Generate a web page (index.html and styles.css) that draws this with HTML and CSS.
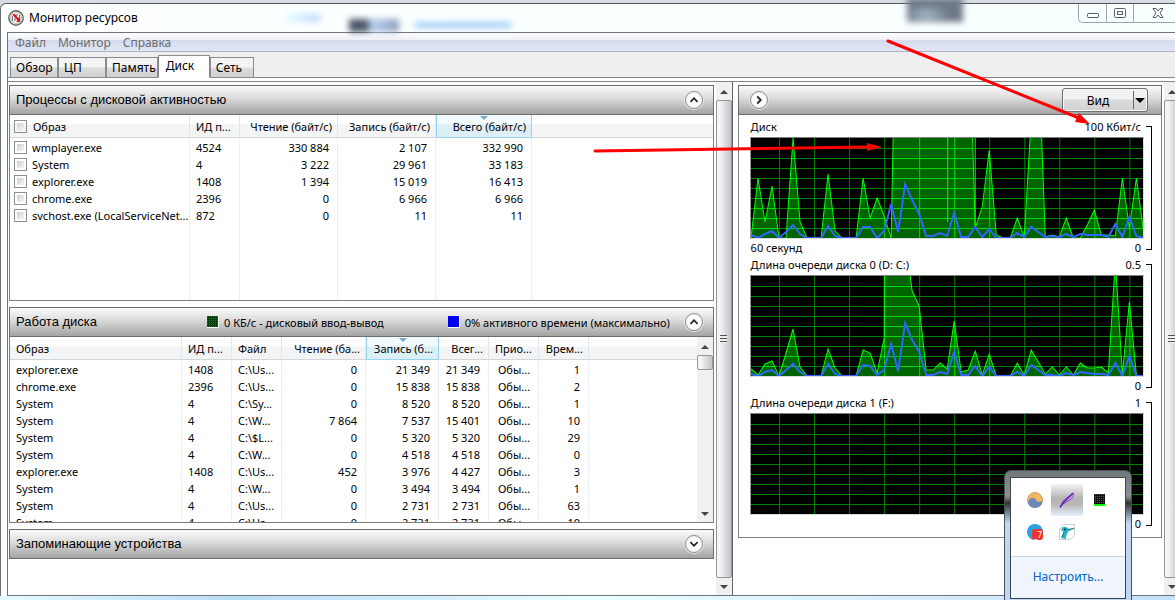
FILE: index.html
```html
<!DOCTYPE html>
<html lang="ru">
<head>
<meta charset="utf-8">
<title>Монитор ресурсов</title>
<link rel="stylesheet" href="styles.css">
</head>
<body>
<div class="window">
  <header class="titlebar">
    <svg class="app-icon" viewBox="0 0 16 16" aria-hidden="true"><circle cx="8" cy="8" r="7.200" fill="#f4f4f4" stroke="#666" stroke-width="1.400"/><circle cx="8" cy="8" r="5.400" fill="#fff" stroke="#aaa" stroke-width=".8"/><path d="M4.500 11V6M7 11V8M11.500 9V5M9 6V4" fill="none" stroke="#777" stroke-width="1.200"/><path d="M4 4.500L7 4L10 8L12 7V12H8L9.500 10.500L6 6.500Z" fill="#d8141c"/></svg>
    <h1 class="title">Монитор ресурсов</h1>
    <span class="ghost ghost-glow"></span>
    <span class="ghost ghost-dark"></span>
    <span class="ghost ghost-text"></span>
    <span class="ghost ghost-badge"></span>
    <div class="caption-buttons">
      <button class="caption" aria-label="Свернуть"><svg width="12" height="12" viewBox="0 0 12 12"><rect x=".5" y="6.500" width="11" height="4" rx="1" fill="#fff" stroke="#555b6b"/></svg></button>
      <button class="caption" aria-label="Развернуть"><svg width="12" height="12" viewBox="0 0 12 12"><rect x=".5" y="1.500" width="11" height="9" rx="1" fill="#fff" stroke="#555b6b"/><rect x="3.500" y="4.500" width="5" height="3" fill="#fff" stroke="#555b6b"/></svg></button>
      <button class="caption caption-close" aria-label="Закрыть"><svg width="12" height="12" viewBox="0 0 12 12"><path d="M1 1.500H4L6 4L8 1.500H11L8 6L11 10.500H8L6 8L4 10.500H1L4 6Z" fill="#fff" stroke="#555b6b"/></svg></button>
    </div>
  </header>

  <div class="client">
    <nav class="menu">
      <button class="menu-item">Файл</button>
      <button class="menu-item">Монитор</button>
      <button class="menu-item">Справка</button>
    </nav>
    <div class="tabs" role="tablist">
      <button class="tab" role="tab">Обзор</button>
      <button class="tab" role="tab">ЦП</button>
      <button class="tab" role="tab">Память</button>
      <button class="tab tab-active" role="tab" aria-selected="true">Диск</button>
      <button class="tab" role="tab">Сеть</button>
    </div>

    <main class="content">
      <div class="left">
        <div class="panels">
          <section class="panel">
            <div class="panel-head">
              <h2 class="panel-title">Процессы с дисковой активностью</h2>
              <button class="round" aria-label="Свернуть раздел"><svg viewBox="0 0 18 18"><path d="M5 11L9 7L13 11"/></svg></button>
            </div>
            <div class="panel-body body-processes">
              <table class="grid">
                <colgroup><col class="w180"><col class="w50"><col class="w98"><col class="w98"><col class="w96"><col></colgroup>
                <thead><tr><th><span class="check-cell"><input type="checkbox" id="all"><label for="all">Образ</label></span></th><th>ИД п...</th><th class="num">Чтение (байт/с)</th><th class="num">Запись (байт/с)</th><th class="num sorted">Всего (байт/с)</th><th></th></tr></thead>
                <tbody>
                  <tr><td><span class="check-cell"><input type="checkbox" id="p1"><label for="p1">wmplayer.exe</label></span></td><td>4524</td><td class="num">330 884</td><td class="num">2 107</td><td class="num">332 990</td><td></td></tr>
                  <tr><td><span class="check-cell"><input type="checkbox" id="p2"><label for="p2">System</label></span></td><td>4</td><td class="num">3 222</td><td class="num">29 961</td><td class="num">33 183</td><td></td></tr>
                  <tr><td><span class="check-cell"><input type="checkbox" id="p3"><label for="p3">explorer.exe</label></span></td><td>1408</td><td class="num">1 394</td><td class="num">15 019</td><td class="num">16 413</td><td></td></tr>
                  <tr><td><span class="check-cell"><input type="checkbox" id="p4"><label for="p4">chrome.exe</label></span></td><td>2396</td><td class="num">0</td><td class="num">6 966</td><td class="num">6 966</td><td></td></tr>
                  <tr><td><span class="check-cell"><input type="checkbox" id="p5"><label for="p5">svchost.exe (LocalServiceNet...</label></span></td><td>872</td><td class="num">0</td><td class="num">11</td><td class="num">11</td><td></td></tr>
                  <tr class="filler"><td></td><td></td><td></td><td></td><td></td><td></td></tr>
                </tbody>
              </table>
            </div>
          </section>

          <section class="panel">
            <div class="panel-head">
              <h2 class="panel-title title-activity">Работа диска</h2>
              <span class="legend legend-io"><i class="swatch swatch-green"></i>0 КБ/с - дисковый ввод-вывод</span>
              <span class="legend"><i class="swatch swatch-blue"></i>0% активного времени (максимально)</span>
              <button class="round" aria-label="Свернуть раздел"><svg viewBox="0 0 18 18"><path d="M5 11L9 7L13 11"/></svg></button>
            </div>
            <div class="panel-body body-activity">
              <div class="table-clip">
              <table class="grid">
                <colgroup><col class="w172"><col class="w50"><col class="w50"><col class="w84"><col class="w73"><col class="w50"><col class="w50"><col class="w50"><col></colgroup>
                <thead><tr><th>Образ</th><th>ИД п...</th><th>Файл</th><th class="num">Чтение (ба...</th><th class="num sorted">Запись (б...</th><th class="num">Всег...</th><th>Прио...</th><th class="num">Врем...</th><th></th></tr></thead>
                <tbody>
                  <tr><td>explorer.exe</td><td>1408</td><td>C:\Us...</td><td class="num">0</td><td class="num">21 349</td><td class="num">21 349</td><td class="prio">Обы...</td><td class="num">1</td><td></td></tr>
                  <tr><td>chrome.exe</td><td>2396</td><td>C:\Us...</td><td class="num">0</td><td class="num">15 838</td><td class="num">15 838</td><td class="prio">Обы...</td><td class="num">2</td><td></td></tr>
                  <tr><td>System</td><td>4</td><td>C:\Sy...</td><td class="num">0</td><td class="num">8 520</td><td class="num">8 520</td><td class="prio">Обы...</td><td class="num">1</td><td></td></tr>
                  <tr><td>System</td><td>4</td><td>C:\W...</td><td class="num">7 864</td><td class="num">7 537</td><td class="num">15 401</td><td class="prio">Обы...</td><td class="num">10</td><td></td></tr>
                  <tr><td>System</td><td>4</td><td>C:\$L...</td><td class="num">0</td><td class="num">5 320</td><td class="num">5 320</td><td class="prio">Обы...</td><td class="num">29</td><td></td></tr>
                  <tr><td>System</td><td>4</td><td>C:\W...</td><td class="num">0</td><td class="num">4 518</td><td class="num">4 518</td><td class="prio">Обы...</td><td class="num">0</td><td></td></tr>
                  <tr><td>explorer.exe</td><td>1408</td><td>C:\Us...</td><td class="num">452</td><td class="num">3 976</td><td class="num">4 427</td><td class="prio">Обы...</td><td class="num">3</td><td></td></tr>
                  <tr><td>System</td><td>4</td><td>C:\W...</td><td class="num">0</td><td class="num">3 494</td><td class="num">3 494</td><td class="prio">Обы...</td><td class="num">1</td><td></td></tr>
                  <tr><td>System</td><td>4</td><td>C:\Us...</td><td class="num">0</td><td class="num">2 731</td><td class="num">2 731</td><td class="prio">Обы...</td><td class="num">63</td><td></td></tr>
                  <tr><td>System</td><td>4</td><td>C:\Us...</td><td class="num">0</td><td class="num">2 731</td><td class="num">2 731</td><td class="prio">Обы...</td><td class="num">10</td><td></td></tr>
                </tbody>
              </table>
              </div>
              <div class="scroll"><span class="arrow arrow-up"></span><span class="thumb thumb-small"></span><span class="track"></span><span class="arrow arrow-down"></span></div>
            </div>
          </section>

          <section class="panel">
            <div class="panel-head panel-closed">
              <h2 class="panel-title">Запоминающие устройства</h2>
              <button class="round" aria-label="Развернуть раздел"><svg viewBox="0 0 18 18"><path d="M5 7L9 11L13 7"/></svg></button>
            </div>
          </section>
        </div>
        <div class="scroll"><span class="arrow arrow-up"></span><span class="thumb"><i class="grip"></i></span><span class="arrow arrow-down"></span></div>
      </div>

      <div class="right">
        <section class="charts">
          <div class="panel-head charts-head">
            <button class="round" aria-label="Скрыть графики"><svg viewBox="0 0 18 18"><path d="M7 5L11 9L7 13"/></svg></button>
            <button class="view"><span class="view-text">Вид</span><span class="view-drop"></span></button>
          </div>
          <div class="charts-body">
            <div class="chart">
              <div class="chart-main">
                <div class="chart-row chart-caption"><span>Диск</span><span>100 Кбит/с</span></div>
                <div class="plot"><svg id="disk" viewBox="0 0 392 100" preserveAspectRatio="none"></svg></div>
                <div class="chart-row"><span>60 секунд</span><span>0</span></div>
              </div>
              <div class="bracket"></div>
            </div>
            <div class="chart">
              <div class="chart-main">
                <div class="chart-row chart-caption"><span>Длина очереди диска 0 (D: C:)</span><span>0.5</span></div>
                <div class="plot"><svg id="queue0" viewBox="0 0 392 100" preserveAspectRatio="none"></svg></div>
                <div class="chart-row"><span></span><span>0</span></div>
              </div>
              <div class="bracket"></div>
            </div>
            <div class="chart">
              <div class="chart-main">
                <div class="chart-row chart-caption"><span>Длина очереди диска 1 (F:)</span><span>1</span></div>
                <div class="plot"><svg id="queue1" viewBox="0 0 392 100" preserveAspectRatio="none"></svg></div>
                <div class="chart-row"><span></span><span>0</span></div>
              </div>
              <div class="bracket"></div>
            </div>
          </div>
        </section>
        <div class="scroll scroll-right"><span class="arrow arrow-up"></span><span class="thumb"><i class="grip"></i></span><span class="arrow arrow-down"></span></div>
      </div>
    </main>
  </div>
  <div class="frame-bottom"></div>

  <svg class="pointers" width="1175" height="200" viewBox="0 0 1175 200" aria-hidden="true">
    <g stroke="#f00" stroke-width="3" stroke-linecap="round" fill="#f00"><path d="M888 41L1079 118M595 151L868 147"/></g>
    <path d="M1090 124L1075 122L1079 113ZM882 147L867 151V143Z" fill="#f00"/>
  </svg>

  <aside class="tray">
    <div class="tray-inner">
      <div class="tray-icons">
        <button class="tray-icon" aria-label="Сеть"><svg viewBox="0 0 16 16"><circle cx="8" cy="8" r="7.500" fill="#f5b660" stroke="#c9a06a"/><path d="M1 10C3 4 8 5 10 9C12 11 14 9 15.500 9A7.500 7.500 0 0 1 1 11Z" fill="#7088b8"/></svg></button>
        <button class="tray-icon tray-selected" aria-label="Перо"><svg viewBox="0 0 16 16"><path d="M2 14L4 9L14 1C15 3 14 6 11 8L4 12Z" fill="#c39be6" stroke="#7a35b5" stroke-width=".8"/><path d="M1 15.500L4 11L14 1" fill="none" stroke="#6a1fa6" stroke-width="1.400"/></svg></button>
        <button class="tray-icon" aria-label="Монитор ресурсов"><svg viewBox="0 0 16 16"><defs><pattern id="dots" width="2" height="2" patternUnits="userSpaceOnUse"><rect width="2" height="2" fill="#111"/><rect width="1" height="1" fill="#0a900a"/></pattern></defs><rect x="3" y="2" width="11" height="12" fill="url(#dots)"/><path d="M3 13H14" stroke="#0f0" stroke-width="2"/></svg></button>
        <button class="tray-icon" aria-label="Сообщения: 7"><svg viewBox="0 0 16 16"><circle cx="8" cy="8" r="8" fill="#2ca2df"/><rect x="5" y="5" width="11" height="11" rx="3" fill="#ee3430"/><text x="7" y="14" font-size="8" fill="#fff">_7</text></svg></button>
        <button class="tray-icon" aria-label="Колибри"><svg viewBox="0 0 16 16"><path d="M.5 15.500V8Q.5 .5 8 .5H15.500V8Q15.500 15.500 8 15.500Z" fill="#fff" stroke="#ccc"/><path d="M2 6Q3 2 7 3L10 5L14 5L10 7Q7 10 7 15L2 14L5 8Z" fill="#22b7c4"/><path d="M9 5.500L15 4.500M5 8L3 13" fill="none" stroke="#176879"/><circle cx="6" cy="5.500" r="1" fill="#123"/></svg></button>
      </div>
      <a class="tray-link" href="#">Настроить...</a>
    </div>
  </aside>
</div>
<script src="charts.js"></script>
</body>
</html>
```
FILE: styles.css
```css
* { box-sizing: border-box; }
body {
  margin: 0;
  font: 11px/17px "Noto Sans", "Open Sans", sans-serif;
  color: #000;
  background: #d8dce4;
  overflow: hidden;
}
button, input { font: inherit; color: inherit; margin: 0; padding: 0; }
button { border: 0; background: none; }
h1, h2 { margin: 0; font-weight: 400; }

.window {
  position: relative;
  display: flex;
  flex-direction: column;
  height: 100vh;
  padding-top: 3px;
  overflow: hidden;
}
.titlebar {
  position: relative;
  display: flex;
  align-items: center;
  gap: 5px;
  height: 29px;
  padding-left: 7px;
  border-top: 1px solid #55575c;
  border-left: 1px solid #6a6d74;
  border-top-left-radius: 6px;
  background: linear-gradient(90deg, #fff 0, #fbffff 20%, #f8ffff 100%);
  flex: none;
}
.app-icon { width: 16px; height: 16px; }
.title { font-size: 12px; line-height: 20px; }
.ghost { position: absolute; filter: blur(3px); }
.ghost-glow { left: 285px; top: 10px; width: 34px; height: 8px; background: linear-gradient(90deg, #e6ffff, #bcd6ff); }
.ghost-dark { left: 348px; top: 15px; width: 50px; height: 13px; background: linear-gradient(90deg, #4c5866 35%, #b9cfee 45%, #8da0bd); }
.ghost-text { left: 414px; top: 18px; width: 96px; height: 6px; background: #a4ccf8; }
.ghost-badge { left: 906px; top: -6px; width: 56px; height: 24px; background: radial-gradient(ellipse at 35% 70%, #a9bccf, #6f7986 45%); }
.caption-buttons {
  display: flex;
  align-self: flex-start;
  margin-left: auto;
  border: 1px solid #a0a5ac;
  border-width: 0 0 1px 1px;
  border-bottom-left-radius: 5px;
}
.caption { display: grid; place-items: center; width: 28px; height: 18px; border-right: 1px solid #a0a5ac; }
.caption + .caption { width: 27px; }
.caption-buttons .caption-close { width: 41px; padding-left: 6px; border: 0; }

.client {
  flex: 1;
  min-height: 0;
  display: flex;
  flex-direction: column;
  margin-left: 7px;
  border: 1px solid #6f747a;
  border-right: 0;
  background: #fff;
  box-shadow: -6px 0 0 #fbfeff, -7px 0 0 #6a6d74;
}
.menu {
  display: flex;
  gap: 12px;
  height: 19px;
  padding-left: 7px;
  border-bottom: 1px solid #aab2c4;
  background: linear-gradient(#fff 0, #eef0f8 38%, #d5dbee 40%, #e0e6f5 100%);
  flex: none;
}
.menu-item { font-size: 12px; color: #6d6d6d; }
.tabs {
  display: flex;
  align-items: flex-end;
  height: 30px;
  padding: 0 0 4px 2px;
  background: linear-gradient(#efefef 25px, #838488 25px, #838488 26px, #fff 26px, #fff 29px, #838488 29px);
  flex: none;
}
.tab {
  height: 21px;
  min-width: 48px;
  padding: 0 1px 0 5px;
  border: 1px solid #8a8a92;
  background: linear-gradient(#f4f4f4 45%, #dcdcdc 55%, #d0d0d0);
  font-size: 12px;
  text-align: left;
}
.tab-active { height: 23px; min-width: 52px; padding: 0 7px 3px; background: #fff; border-bottom-color: #fff; }
.tab:last-child { min-width: 44px; }

.content {
  flex: 1;
  min-height: 0;
  display: grid;
  grid-template-columns: minmax(0, 724fr) minmax(0, 442fr);
}
.left { display: flex; min-width: 0; border-right: 1px solid #63656a; }
.panels { flex: 1; min-width: 0; display: flex; flex-direction: column; gap: 6px; padding: 3px 2px 0 1px; }
.panel-head {
  display: flex;
  align-items: center;
  height: 30px;
  padding: 0 10px 0 6px;
  border: 1px solid #6c6c6c;
  background: linear-gradient(#fbfbfb, #dedede 40%, #a3a3a3);
}
.panel-title { font: 13px/20px "Liberation Sans", Arial, sans-serif; margin-right: auto; }
.title-activity { flex: none; width: 191px; margin-right: 0; }
.round {
  width: 18px;
  height: 18px;
  border: 1px solid #909090;
  border-radius: 50%;
  background: radial-gradient(circle, #fff 45%, #e4e4e4);
  box-shadow: 0 0 0 1px #e6e6e6;
  flex: none;
}
.round svg { display: block; width: 16px; height: 16px; }
.round path { fill: none; stroke: #222; stroke-width: 2; }
.legend { display: flex; align-items: center; gap: 5px; margin-right: auto; white-space: nowrap; }
.legend-io { margin-right: 64px; }
.swatch { width: 12px; height: 12px; border: 1px solid #fff; border-width: 0 1px 1px 0; }
.swatch-green { background: conic-gradient(#064006 75%, #008a00 75%) 0 0 / 2px 2px; }
.swatch-blue { background: #0000f4; }
.panel-body { border: 1px solid #808080; border-top: 0; background: #fff; overflow: hidden; }
.body-processes { height: 186px; }
.body-activity { display: flex; height: 186px; }
.table-clip { flex: 1; min-width: 0; overflow: hidden; }

.grid { width: 100%; height: 100%; table-layout: fixed; border-collapse: separate; border-spacing: 0; }
.w50 { width: 50px; } .w73 { width: 73px; } .w84 { width: 84px; } .w96 { width: 96px; }
.w98 { width: 98px; } .w172 { width: 172px; } .w180 { width: 180px; }
.grid th {
  height: 23px;
  padding: 0 5px 0 6px;
  border-right: 1px solid #e2e6ea;
  border-bottom: 1px solid #d5d5d5;
  background: linear-gradient(#fff 40%, #f3f4f6 45%);
  font-weight: 400;
  text-align: left;
  white-space: nowrap;
}
.grid td { height: 17px; padding: 0 5px 0 6px; border-right: 1px solid #e8f1fb; white-space: nowrap; line-height: 17px; }
.grid th:last-child, .grid td:last-child { border-right: 0; }
.grid tbody tr:first-child td { height: 18px; padding-top: 1px; }
.grid .filler td { height: auto; }
.grid .num { text-align: right; }
.grid td.num { padding-right: 8px; }
.grid td.prio { padding-left: 9px; }
.grid th.sorted {
  position: relative;
  border: 1px solid #96d5ee;
  border-top: 0;
  background: linear-gradient(#f3fafd 40%, #dceff7 45%);
}
.grid th.sorted::before {
  content: "";
  position: absolute;
  left: 50%;
  top: 1px;
  margin-left: -4px;
  border: 4px solid transparent;
  border-top-color: #71aac5;
  border-bottom: 0;
}
.check-cell { display: flex; align-items: center; gap: 5px; margin-left: -2px; }
.grid th .check-cell { gap: 6px; }
.check-cell input {
  appearance: none;
  width: 13px;
  height: 13px;
  border: 1px solid #8e8f8f;
  background: linear-gradient(135deg, #cbcfd5, #f6f6f6) content-box #f4f4f4;
  padding: 2px;
  flex: none;
}

.scroll { display: flex; flex-direction: column; width: 16px; padding-top: 1px; background: #f0f0f0; flex: none; }
.arrow { display: grid; place-items: center; height: 17px; flex: none; }
.arrow::before { content: ""; border: 4px solid transparent; }
.arrow-up::before { border-bottom-color: #444; border-top: 0; }
.arrow-down::before { border-top-color: #444; border-bottom: 0; }
.thumb {
  flex: 1;
  display: grid;
  place-items: center;
  border: 1px solid #959595;
  border-radius: 2px;
  background: linear-gradient(90deg, #f5f5f5 20%, #e2e2e4 50%, #c4c4c9);
}
.thumb-small { flex: none; height: 15px; }
.track { flex: 1; }
.grip { width: 7px; height: 8px; background: repeating-linear-gradient(#555 0 1px, #eee 1px 3px); }

.right { display: flex; min-width: 0; padding-left: 5px; gap: 2px; overflow: hidden; }
.charts { flex: 1; min-width: 0; align-self: flex-start; margin-top: 3px; }
.charts-head { justify-content: space-between; padding: 0 13px 0 11px; }
.view {
  display: flex;
  align-items: center;
  width: 86px;
  height: 24px;
  border: 1px solid #707070;
  border-radius: 3px;
  background: linear-gradient(#f2f2f2 45%, #dddddd 50%, #cfcfcf);
  box-shadow: inset 0 0 0 1px #f8f8f8;
}
.view-text { flex: 1; font-size: 12px; }
.view-drop { display: grid; place-items: center; width: 14px; height: 18px; border-left: 1px solid #666; }
.view-drop::before { content: ""; border: 5px solid transparent; border-top-color: #000; border-bottom: 0; }
.charts-body { padding: 4px 9px 4px 11px; border: 1px solid #808080; border-top: 0; background: #fff; }
.chart { display: flex; gap: 2px; height: 138px; }
.chart-main { flex: 1; min-width: 0; }
.chart-row { display: flex; justify-content: space-between; height: 18px; padding: 0 3px 0 1px; }
.chart-caption { line-height: 15px; }
.plot { height: 102px; border: 1px solid #dcdcdc; border-top: 1px solid #808080; border-left-color: #999; background: #000; }
.plot svg { display: block; width: 100%; height: 100px; }
.bracket { width: 6px; height: 124px; margin-top: 7px; border: 1px solid #000; border-left: 0; }
.scroll-right { margin-right: -5px; }

.fill { fill: #006400; stroke: none; }
.area-line { fill: none; stroke: #00ff00; stroke-width: 1; }
.blue-line { fill: none; stroke: #3264ff; stroke-width: 2; }
.frame-bottom { height: 4px; background: linear-gradient(90deg, #e4fbff, #b9dcf7 20%, #e9ffff 50%, #c5e0fa); flex: none; }
.pointers { position: absolute; left: 0; top: 0; pointer-events: none; }

.tray {
  position: absolute;
  right: 43px;
  top: 470px;
  width: 128px;
  height: 140px;
  padding: 6px 5px;
  border: 1px solid #4b5055;
  border-radius: 7px 7px 0 0;
  background: linear-gradient(#70777a 0, #8d9496 25px, #303438 32px, #c2d8f3 52px, #bdd6f4);
}
.tray-inner { height: 122px; border: 1px solid #3d4348; background: #fff; display: flex; flex-direction: column; }
.tray-icons { display: grid; grid-template-columns: repeat(3, 32px); grid-auto-rows: 32px; padding: 6px 8px; flex: 1; }
.tray-icon { display: grid; place-items: center; }
.tray-icon svg { width: 16px; height: 16px; }
.tray-selected { background: linear-gradient(#f4f4f4, #b4b4b4 45%, #b8b8b8 65%, #e5f2ff); }
.tray-link {
  height: 42px;
  border-top: 1px solid #ccd7e5;
  background: #f0f4fb;
  color: #0066cc;
  font-size: 12px;
  line-height: 40px;
  text-align: center;
  text-decoration: none;
}
```
FILE: charts.js
```javascript
// Samples are distances from the top of the plot, one every 7 units.
const STEP = 7;
const T = -150;
const data = {
  disk: {
    area: [100,40,84,48,100,100,0,84,100,100,100,36,93,100,100,100,40,80,60,78,100,-250,T,T,T,T,T,T,T,T,T,T,90,69,12,97,100,100,80,99,-20,-90,99,97,99,80,100,100,87,72,97,97,98,40,90,40,92],
    time: [97,100,96,93,100,94,87,96,100,100,100,88,98,100,100,100,89,89,100,93,66,94,46,62,76,98,98,95,98,75,99,99,89,99,91,100,100,100,95,99,89,94,99,98,99,96,99,96,97,97,97,99,86,99,79,98,100],
    extra: "M196.5 0V84M224 0V90"
  },
  queue0: {
    area: [93,99,88,85,100,77,53,91,100,100,100,73,92,100,100,100,74,77,97,62,-2000,T,-40,15,30,94,94,87,93,45,96,94,75,99,78,100,100,100,87,99,74,86,98,91,99,91,99,87,92,92,91,97,-15,98,26,99,100],
    time: [98,100,96,94,100,94,88,96,100,100,100,88,98,100,100,100,89,90,99,94,68,95,47,64,76,99,99,96,98,76,99,99,90,100,91,100,100,100,96,100,89,94,99,99,100,97,99,96,97,98,98,99,87,100,80,100,100],
    extra: ""
  },
  queue1: null
};

const points = list => list.map((v, i) => `${i * STEP},${v}`).join(" ");

function gridLines(color) {
  let d = "";
  for (let y = 10; y < 100; y += 10) d += `M0 ${y + 0.5}H392`;
  for (let x = 28; x < 392; x += 35) d += `M${x + 0.5} 0V100`;
  return `<path d="${d}" stroke="${color}" fill="none"/>`;
}

for (const [id, series] of Object.entries(data)) {
  let html = gridLines("#008000");
  if (series) {
    const area = `0,100 ${points(series.area)} 392,100`;
    html += `<clipPath id="clip-${id}"><polygon points="${area}"/></clipPath>
      <polygon class="fill" points="${area}"/>
      <g clip-path="url(#clip-${id})">${gridLines("#00dc00")}</g>
      <polyline class="area-line" points="${points(series.area)}"/>
      <path class="area-line" d="${series.extra}"/>
      <polyline class="blue-line" points="${points(series.time)}"/>`;
  }
  document.getElementById(id).innerHTML = html;
}
```
